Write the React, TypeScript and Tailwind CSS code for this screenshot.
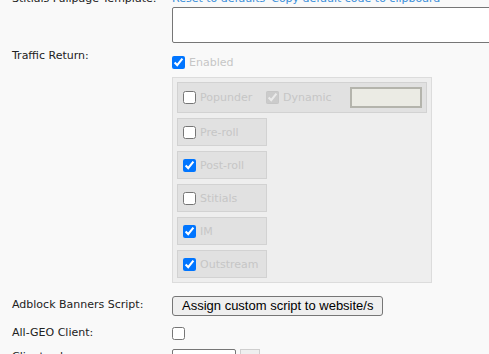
import React from "react";

const font = { fontFamily: "Tahoma, 'DejaVu Sans', 'Noto Sans', sans-serif" };

const Check = ({ on, off }: { on?: boolean; off?: boolean }) => (
  <input
    type="checkbox"
    checked={!!on}
    disabled={off}
    readOnly
    className="w-[13px] h-[13px] m-0 shrink-0 accent-[#0075ff]"
  />
);

const Option = ({ label, on }: { label: string; on?: boolean }) => (
  <div className="flex items-center w-[90px] h-[28px] pl-[5px] gap-[4px] bg-[#e1e1e1] border border-[#d2d2d2]">
    <Check on={on} />
    <span className="text-[11px] leading-[13px] text-[#c6c6c6]">{label}</span>
  </div>
);

const Row = ({ label, children, className = "" }: { label: string; children: React.ReactNode; className?: string }) => (
  <div className={`flex ${className}`}>
    <div className="w-[160px] shrink-0 text-[11px] leading-[16px] text-[#222]">{label}</div>
    <div className="flex-1">{children}</div>
  </div>
);

const App = () => {
  return (
    <div className="w-[489px] h-[354px] overflow-hidden bg-[#f9f9f9] pl-3" style={font}>
      <Row label="Stitials Fullpage Template:" className="-mt-[9px]">
        <div className="text-[11px] text-[#3b8fd9] leading-[16px] flex gap-[6px]">
          <span>Reset to defaults</span>
          <span>Copy default code to clipboard</span>
        </div>
        <textarea readOnly className="block w-[330px] h-[36px] bg-white border border-[#767676] rounded-[2px] resize-none" />
      </Row>

      <Row label="Traffic Return:" className="mt-[5px]">
        <div className="flex items-center gap-[4px] mt-[8px] h-[13px]">
          <Check on />
          <span className="text-[11px] leading-[13px] text-[#c6c6c6]">Enabled</span>
        </div>
        <div className="mt-[8px] w-[260px] bg-[#eeeeee] border border-[#dcdcdc] p-[4px] flex flex-col gap-[5px]">
          <div className="flex items-center h-[31px] pl-[5px] bg-[#e1e1e1] border border-[#d2d2d2]">
            <Check />
            <span className="ml-[4px] text-[11px] leading-[13px] text-[#c6c6c6] w-[66px]">Popunder</span>
            <Check on off />
            <span className="ml-[4px] text-[11px] leading-[13px] text-[#c6c6c6]">Dynamic</span>
            <div className="ml-auto mr-[4px] w-[72px] h-[21px] bg-[#ebebe4] border-2 border-[#b4b4ac]" />
          </div>
          <Option label="Pre-roll" />
          <Option label="Post-roll" on />
          <Option label="Stitials" />
          <Option label="IM" on />
          <Option label="Outstream" on />
        </div>
      </Row>

      <Row label="Adblock Banners Script:" className="mt-[10px] items-center">
        <button className="h-[20px] px-[9px] text-[13px] leading-[16px] text-black bg-[#efefef] border border-[#767676] rounded-[3px]" style={{ fontFamily: "Arial, 'Liberation Sans', sans-serif" }}>
          Assign custom script to website/s
        </button>
      </Row>

      <Row label="All-GEO Client:" className="mt-[8px] items-center">
        <div className="flex"><Check /></div>
      </Row>

      <Row label="Client color:" className="mt-[8px]">
        <div className="flex gap-[4px]">
          <div className="w-[64px] h-[20px] bg-white border border-[#767676] rounded-[2px]" />
          <div className="w-[20px] h-[20px] bg-[#efefef] border border-[#cfcfcf]" />
        </div>
      </Row>
    </div>
  );
};

export default App;
